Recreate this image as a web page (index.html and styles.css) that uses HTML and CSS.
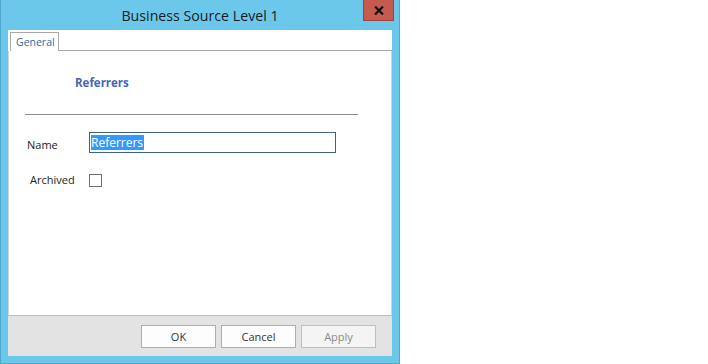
FILE: index.html
```html
<!DOCTYPE html>
<html>
<head>
<meta charset="utf-8">
<title>Business Source Level 1</title>
<link rel="stylesheet" href="styles.css">
</head>
<body>
<div class="window">
  <div class="titlebar">
    <span></span>
    <div class="title">Business Source Level 1</div>
    <div class="close"><svg width="10" height="9" viewBox="0 0 10 9"><path d="M1 0.5 L9 8.5 M9 0.5 L1 8.5" stroke="#111" stroke-width="2.2" fill="none"/></svg></div>
  </div>
  <div class="client">
    <div class="tabs">
      <div class="tab">General</div>
      <div class="tab-fill"></div>
    </div>
    <div class="page">
      <div class="heading">Referrers</div>
      <div class="rule"></div>
      <div class="row row-name">
        <div class="label">Name</div>
        <div class="input"><span class="sel">Referrers</span></div>
      </div>
      <div class="row row-arch">
        <div class="label">Archived</div>
        <div class="check"></div>
      </div>
    </div>
    <div class="footer">
      <div class="btn">OK</div>
      <div class="btn">Cancel</div>
      <div class="btn disabled">Apply</div>
    </div>
  </div>
</div>
</body>
</html>
```

FILE: styles.css
```css
html, body {
  margin: 0;
  padding: 0;
  background: #ffffff;
}
body {
  font-family: "Open Sans", "Noto Sans", "DejaVu Sans", sans-serif;
  width: 708px;
  height: 364px;
  overflow: hidden;
}
.window {
  width: 400px;
  height: 364px;
  box-sizing: border-box;
  background: #6bc8eb;
  border: 1px solid #4fa6cf;
  border-top: none;
  display: flex;
  flex-direction: column;
}
.titlebar {
  height: 30px;
  display: grid;
  grid-template-columns: 1fr auto 1fr;
  align-items: start;
  flex: none;
}
.title {
  font-size: 14.2px;
  color: #1b1b1b;
  line-height: 30px;
  padding-top: 1px;
}
.close {
  justify-self: end;
  margin-right: 5px;
  width: 31px;
  height: 21px;
  box-sizing: border-box;
  background: #c75a4e;
  border: 1px solid #9f4238;
  border-top: none;
  display: flex;
  align-items: center;
  justify-content: center;
}
.client {
  flex: 1;
  margin: 0 7px 7px 7px;
  display: flex;
  flex-direction: column;
}
.tabs {
  height: 21px;
  flex: none;
  background: #ffffff;
  display: flex;
  align-items: flex-end;
  box-sizing: border-box;
}
.tab {
  height: 19px;
  box-sizing: border-box;
  margin-left: 2px;
  padding: 0 3px 0 5px;
  border: 1px solid #a9a9a9;
  border-bottom: none;
  font-size: 10.5px;
  line-height: 18px;
  color: #2d6aa0;
  background: #ffffff;
}
.tab-fill {
  flex: 1;
  height: 1px;
  background: #a9a9a9;
}
.page {
  flex: 1;
  background: #ffffff;
  border-left: 1px solid #d4d4d4;
  border-right: 1px solid #d4d4d4;
  display: flex;
  flex-direction: column;
}
.heading {
  margin: 25px 0 0 66px;
  font-size: 11.5px;
  font-weight: bold;
  line-height: 14px;
  color: #4466be;
}
.rule {
  margin: 24px 0 0 16px;
  width: 333px;
  height: 1px;
  background: #8c8c8c;
}
.row {
  display: flex;
  align-items: center;
}
.label {
  box-sizing: border-box;
  width: 80px;
  font-size: 11px;
  color: #222222;
}
.row-name {
  margin-top: 17px;
}
.row-name .label {
  padding-left: 18px;
  padding-top: 4px;
}
.input {
  width: 247px;
  height: 21px;
  box-sizing: border-box;
  border: 1px solid #3f6482;
  padding: 2px 0 0 1px;
  font-size: 12px;
  line-height: 15px;
}
.sel {
  background: #3399ff;
  color: #ffffff;
  display: inline-block;
  padding: 0 1px 0 0;
}
.row-arch {
  margin-top: 19px;
}
.row-arch .label {
  padding-left: 21px;
  padding-bottom: 1px;
}
.check {
  width: 13px;
  height: 13px;
  box-sizing: border-box;
  border: 1px solid #707070;
  background: #ffffff;
}
.footer {
  height: 41px;
  flex: none;
  box-sizing: border-box;
  background: #e3e3e3;
  border-top: 1px solid #bdbdbd;
  display: flex;
  justify-content: flex-end;
  align-items: center;
  gap: 5px;
  padding: 0 16px 0 0;
}
.btn {
  width: 75px;
  height: 23px;
  box-sizing: border-box;
  border: 1px solid #adadad;
  background: #fdfdfd;
  font-size: 11px;
  line-height: 21px;
  text-align: center;
  color: #333333;
}
.btn.disabled {
  background: #f4f4f4;
  border-color: #bfbfbf;
  color: #8a8a8a;
}
```
